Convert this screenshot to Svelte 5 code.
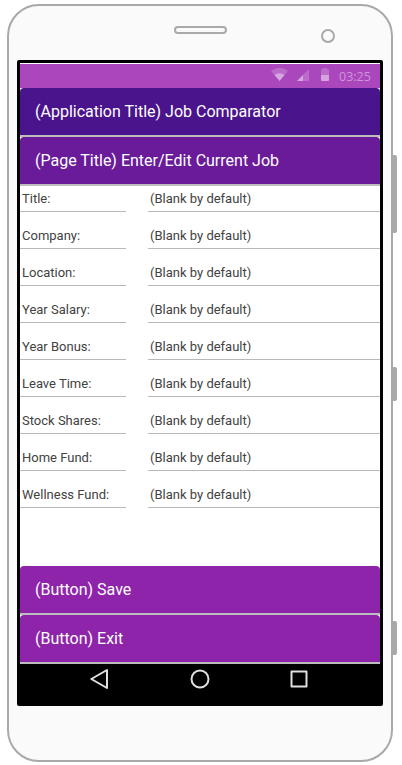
<script>
  const fields = ['Title:', 'Company:', 'Location:', 'Year Salary:', 'Year Bonus:', 'Leave Time:', 'Stock Shares:', 'Home Fund:', 'Wellness Fund:'];
  const placeholder = '(Blank by default)';
</script>

<main>
  <div class="phone">
    <div class="top">
      <span class="speaker"></span>
      <span class="camera"></span>
    </div>
    <div class="screen">
      <div class="status">
        <svg class="icons" width="60" height="16" viewBox="0 0 60 16" fill="#fff">
          <path opacity=".2" d="M0 4Q8.500-2.500 17 4L8.500 14Z" />
          <path opacity=".4" d="M3.500 8Q8.500 4.500 13.500 8L8.500 14Z" />
          <path opacity=".2" d="M26 14L38 2V14Z" />
          <path opacity=".4" d="M26 14L32 8V14Z" />
          <path opacity=".2" d="M52 1h4v1h1q1 0 1 1v5h-8V3q0-1 1-1h1Z" />
          <path opacity=".5" d="M50 8h8v5q0 1-1 1h-6q-1 0-1-1Z" />
        </svg>
        <time>03:25</time>
      </div>
      <header class="bar app">(Application Title) Job Comparator</header>
      <h1 class="bar page">(Page Title) Enter/Edit Current Job</h1>
      <div class="form">
        {#each fields as field}
          <div class="row">
            <span class="label">{field}</span>
            <span class="value">{placeholder}</span>
          </div>
        {/each}
      </div>
      <button class="bar">(Button) Save</button>
      <button class="bar">(Button) Exit</button>
      <nav>
        <svg width="360" height="30" viewBox="0 0 360 30" fill="none" stroke="#e0e0e0" stroke-width="2" stroke-linejoin="round">
          <path d="M71.300 15L87 6V24Z" />
          <circle cx="180" cy="15" r="8.500" />
          <rect x="271.500" y="7.500" width="15" height="15" />
        </svg>
      </nav>
    </div>
  </div>
  <div class="side">
    <i class="power"></i>
    <i class="key"></i>
    <i class="key low"></i>
  </div>
</main>

<style>
  :global(body) { background: #fff; }
  main {
    display: flex;
    width: 402px;
    height: 765px;
    padding: 4px 0 0 7px;
    box-sizing: border-box;
    overflow: hidden;
    font-family: Roboto, sans-serif;
  }
  .phone {
    width: 386px;
    height: 758px;
    box-sizing: border-box;
    border: 2px solid #a9a9a9;
    border-radius: 32px;
    background: #fafafa;
    padding: 0 8px;
    flex: none;
  }
  .top {
    height: 54px;
    display: flex;
    align-items: flex-start;
  }
  .speaker {
    box-sizing: border-box;
    width: 53px;
    height: 8px;
    margin: 20px 0 0 157px;
    border: 2px solid #a9a9a9;
    border-radius: 4px;
  }
  .camera {
    box-sizing: border-box;
    width: 14px;
    height: 14px;
    margin: 23px 0 0 94px;
    border: 2px solid #a9a9a9;
    border-radius: 50%;
  }
  .screen {
    box-sizing: border-box;
    width: 366px;
    height: 646px;
    padding: 3px 3px 0;
    background: linear-gradient(#fff, #fff) 3px 3px / 360px 600px no-repeat #000;
    border-radius: 2px;
    display: flex;
    flex-direction: column;
  }
  .status {
    box-sizing: border-box;
    height: 25px;
    border-top: 1px solid #fff;
    background: #ab47bc;
    display: flex;
    align-items: center;
    justify-content: flex-end;
    padding-right: 9px;
    flex: none;
  }
  .icons { margin: 0 8px 2px 0; }
  time {
    font: 12.500px/24px "Open Sans", sans-serif;
    color: #d194db;
    width: 32px;
    padding-top: 1px;
    white-space: nowrap;
  }
  .bar {
    display: block;
    box-sizing: border-box;
    width: 360px;
    height: 49px;
    flex: none;
    margin: 0;
    padding: 0 15px;
    border: 0;
    border-bottom: 2px solid #bdbdbd;
    border-radius: 4px 4px 0 0;
    background: #8e24aa;
    font: 400 16px/47px Roboto, sans-serif;
    color: #fff;
    text-align: left;
  }
  .app { background: #4a148c; }
  .page { background: #6a1b9a; }
  .form {
    box-sizing: border-box;
    height: 380px;
    background: #fff;
    overflow: hidden;
  }
  .row {
    display: flex;
    gap: 22px;
    height: 37px;
  }
  .row:first-child { margin-top: -11px; }
  .row span {
    box-sizing: border-box;
    height: 37px;
    padding: 15px 2px 0;
    border-bottom: 1px solid #b8b8b8;
    font-size: 13px;
    line-height: 17px;
    color: #424242;
  }
  .row .label { width: 106px; }
  .row .value { flex: 1; }
  nav svg { display: block; }
  .side {
    width: 4px;
    height: 758px;
    display: flex;
    flex-direction: column;
  }
  .side i {
    display: block;
    flex: none;
    background: #a9a9a9;
    border-radius: 0 2px 2px 0;
  }
  .power { height: 78px; margin-top: 151px; }
  .key { height: 34px; margin-top: 134px; }
  .low { margin-top: 220px; }
</style>
